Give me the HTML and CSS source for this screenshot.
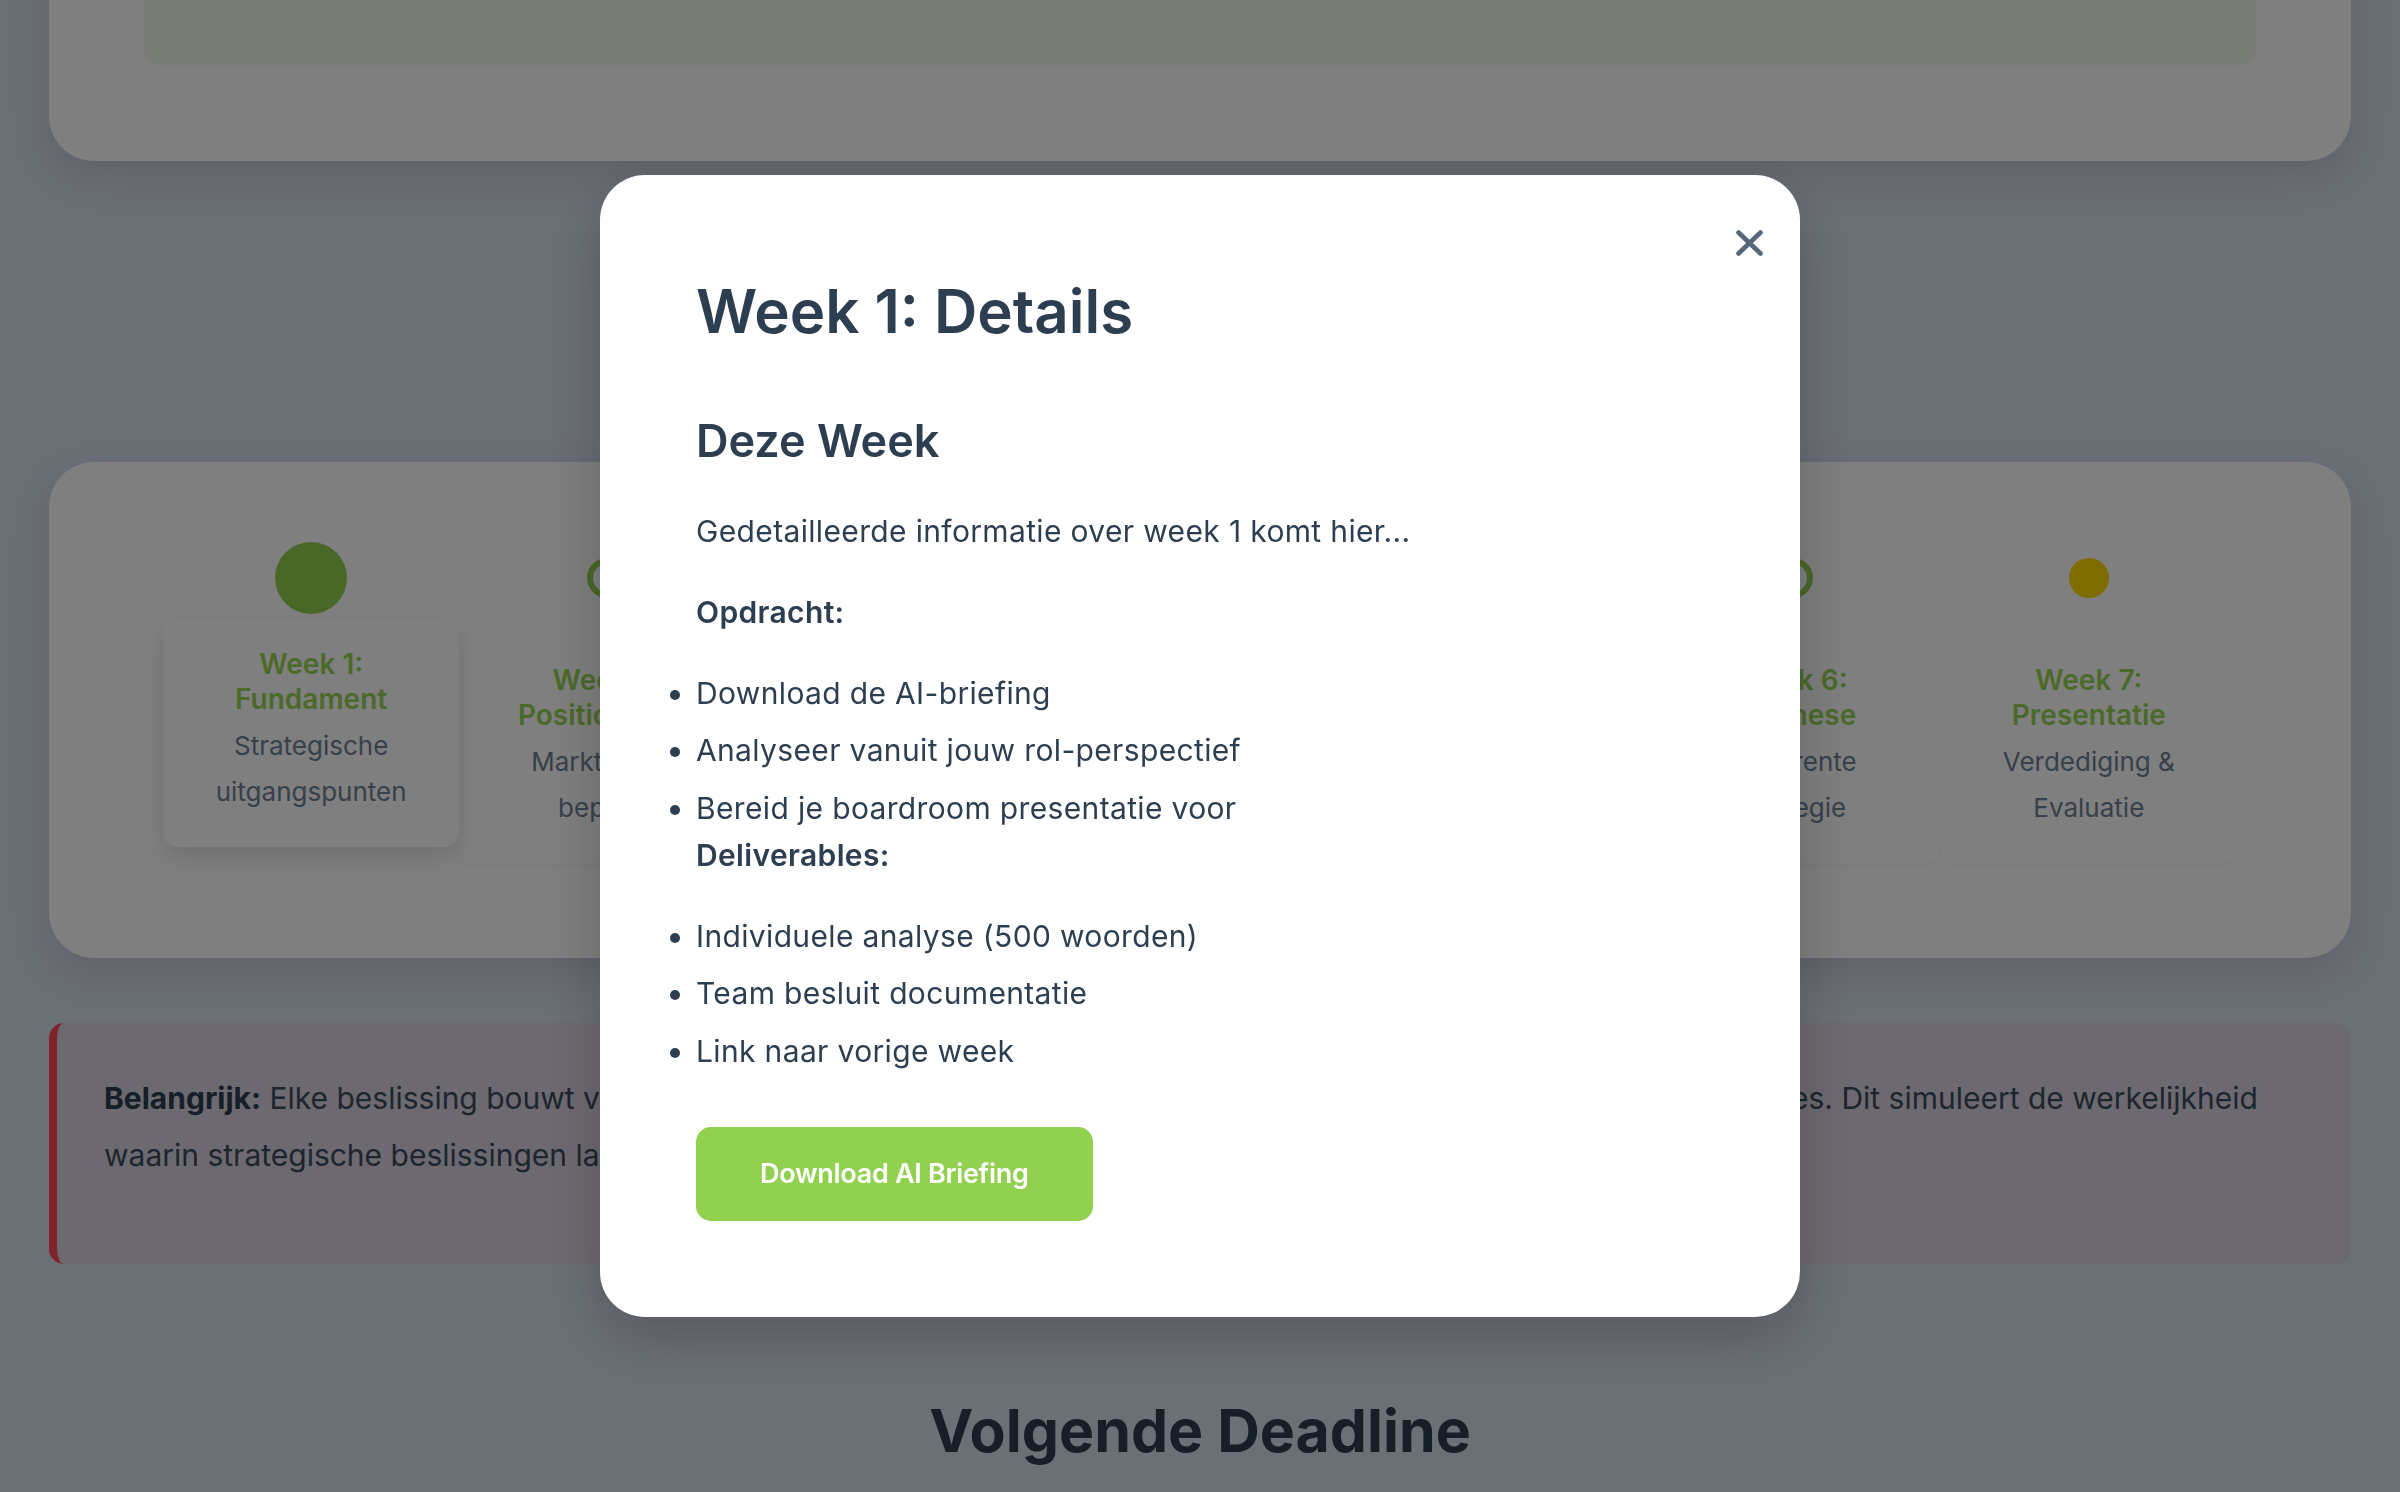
FILE: index.html
```html
<!DOCTYPE html>
<html lang="nl">
<head>
<meta charset="utf-8">
<title>Week 1: Details</title>
<link rel="stylesheet" href="styles.css">
</head>
<body>
<div class="page">
  <section class="card intro-card">
    <div class="intro-box"></div>
  </section>

  <h2 class="section-title">Project Tijdlijn</h2>

  <section class="card timeline-card">
    <div class="timeline">
      <div class="week active">
        <div class="dot-row"><span class="dot dot-active"></span></div>
        <div class="week-card">
          <h4 class="week-title">Week 1: Fundament</h4>
          <p class="week-desc">Strategische uitgangspunten</p>
        </div>
      </div>
      <div class="week">
        <div class="dot-row"><span class="dot"></span></div>
        <div class="week-card">
          <h4 class="week-title">Week 2: Positionering</h4>
          <p class="week-desc">Marktpositie bepalen</p>
        </div>
      </div>
      <div class="week">
        <div class="dot-row"><span class="dot"></span></div>
        <div class="week-card">
          <h4 class="week-title">Week 3: Analyse</h4>
          <p class="week-desc">Concurrentie onderzoek</p>
        </div>
      </div>
      <div class="week">
        <div class="dot-row"><span class="dot"></span></div>
        <div class="week-card">
          <h4 class="week-title">Week 4: Strategie</h4>
          <p class="week-desc">Strategische opties</p>
        </div>
      </div>
      <div class="week">
        <div class="dot-row"><span class="dot"></span></div>
        <div class="week-card">
          <h4 class="week-title">Week 5: Uitvoering</h4>
          <p class="week-desc">Implementatie plannen</p>
        </div>
      </div>
      <div class="week">
        <div class="dot-row"><span class="dot"></span></div>
        <div class="week-card">
          <h4 class="week-title">Week 6: Synthese</h4>
          <p class="week-desc">Coherente strategie</p>
        </div>
      </div>
      <div class="week">
        <div class="dot-row"><span class="dot dot-final"></span></div>
        <div class="week-card">
          <h4 class="week-title">Week 7: Presentatie</h4>
          <p class="week-desc">Verdediging &amp; Evaluatie</p>
        </div>
      </div>
    </div>
  </section>

  <div class="notice">
    <p><strong>Belangrijk:</strong> Elke beslissing bouwt voort op keuzes die je team in voorgaande weken maakte en bepaalt de volgende fases. Dit simuleert de werkelijkheid waarin strategische beslissingen langetermijngevolgen hebben voor de hele organisatie.</p>
  </div>

  <h2 class="section-title deadline-title">Volgende Deadline</h2>
</div>

<div class="overlay">
  <div class="modal">
    <button class="close" aria-label="Sluiten">
      <svg width="27" height="26" viewBox="0 0 27 26"><path d="M2.5 2.5 L24.5 23.5 M24.5 2.5 L2.5 23.5" stroke="#56677b" stroke-width="4.6" stroke-linecap="round"/></svg>
    </button>
    <h2 class="modal-title">Week 1: Details</h2>
    <h3 class="modal-sub">Deze Week</h3>
    <p class="lead">Gedetailleerde informatie over week 1 komt hier...</p>
    <p class="label">Opdracht:</p>
    <ul class="list">
      <li>Download de AI-briefing</li>
      <li>Analyseer vanuit jouw rol-perspectief</li>
      <li>Bereid je boardroom presentatie voor</li>
    </ul>
    <p class="label label-tight">Deliverables:</p>
    <ul class="list">
      <li>Individuele analyse (500 woorden)</li>
      <li>Team besluit documentatie</li>
      <li>Link naar vorige week</li>
    </ul>
    <button class="btn">Download AI Briefing</button>
  </div>
</div>
</body>
</html>
```

FILE: styles.css
```css
* { box-sizing: border-box; }

html, body {
  margin: 0;
  padding: 0;
}

body {
  background: #d6deec;
  font-family: Inter, "Noto Sans", sans-serif;
  color: #2c3e50;
  height: 1492px;
  overflow: hidden;
}

.page {
  padding: 0 49px;
  margin-top: -200px;
}

.card {
  background: #ffffff;
  border-radius: 45px;
  box-shadow: 0 15px 45px rgba(0, 0, 0, 0.12);
}

.intro-card {
  padding: 96px 95px;
}

.intro-box {
  height: 169px;
  background: #f4fbea;
  border-radius: 15px;
}

.section-title {
  text-align: center;
  font-size: 59px;
  line-height: 70px;
  font-weight: 700;
  color: #2c3e50;
  margin: 132px 0 99px;
}

.timeline-card {
  padding: 80px 114px 95px;
}

.timeline {
  display: flex;
}

.week {
  flex: 1 1 0;
  min-width: 0;
  display: flex;
  flex-direction: column;
  align-items: center;
}

.dot-row {
  height: 72px;
  display: flex;
  align-items: center;
  justify-content: center;
  margin-bottom: 21px;
}

.dot {
  display: block;
  width: 40px;
  height: 40px;
  border-radius: 50%;
  background: #ffffff;
  border: 6px solid #92d050;
}

.dot-active {
  width: 72px;
  height: 72px;
  border: none;
  background: #92d050;
}

.dot-final {
  border: none;
  background: #ffd900;
}

.week-card {
  align-self: stretch;
  height: 228px;
  background: #ffffff;
  border-radius: 15px;
  padding: 28px 45px 33px;
  text-align: center;
  box-shadow: 0 3px 10px rgba(0, 0, 0, 0.04);
}

.week.active .week-card {
  transform: translateY(-16px);
  box-shadow: 0 10px 25px rgba(0, 0, 0, 0.12);
}

.week-title {
  margin: 0 0 7px;
  font-size: 28px;
  line-height: 34.5px;
  font-weight: 600;
  color: #96d455;
}

.week-desc {
  margin: 0;
  font-size: 26px;
  line-height: 45.5px;
  color: #718096;
}

.notice {
  margin-top: 65px;
  background: rgba(255, 71, 87, 0.08);
  border-left: 8px solid #ff4757;
  border-radius: 15px;
  padding: 47px 47px 81px;
  font-size: 30px;
  line-height: 56.7px;
  color: #3d4a5c;
}

.notice p {
  margin: 0;
}

.notice strong {
  font-weight: 700;
  color: #2c3e50;
}

.deadline-title {
  margin: 132px 0 0;
}

.overlay {
  position: fixed;
  inset: 0;
  background: rgba(0, 0, 0, 0.5);
  display: flex;
  align-items: center;
  justify-content: center;
}

.modal {
  position: relative;
  width: 1200px;
  background: #ffffff;
  border-radius: 45px;
  padding: 96px;
  box-shadow: 0 20px 60px rgba(0, 0, 0, 0.2);
}

.close {
  position: absolute;
  top: 55px;
  right: 37px;
  width: 27px;
  height: 26px;
  padding: 0;
  border: 0;
  background: none;
  cursor: pointer;
}

.close svg {
  display: block;
}

.modal-title {
  margin: 4px 0 0;
  font-size: 60px;
  line-height: 72px;
  font-weight: 600;
  color: #2c3e50;
}

.modal-sub {
  margin: 66.6px 0 0;
  font-size: 45px;
  line-height: 54px;
  font-weight: 600;
  color: #2c3e50;
}

.modal p,
.modal li {
  font-size: 30px;
  line-height: 46px;
  letter-spacing: 0.35px;
  color: #2c3e50;
}

.lead {
  margin: 40px 0 0;
}

.label {
  margin: 34.5px 0 0;
  font-weight: 600;
}

.label-tight {
  margin-top: 1px;
}

.list {
  margin: 35px 0 0;
  padding: 0;
  list-style: disc outside;
}

.list li {
  margin-bottom: 11.5px;
}

.list li:last-child {
  margin-bottom: 0;
}

.btn {
  display: block;
  margin-top: 53px;
  padding: 30px 64px;
  border: none;
  border-radius: 15px;
  background: #92d050;
  color: #ffffff;
  font-family: Inter, "Noto Sans", sans-serif;
  font-size: 27px;
  line-height: 34px;
  font-weight: 600;
  letter-spacing: -0.3px;
  cursor: pointer;
}
```
